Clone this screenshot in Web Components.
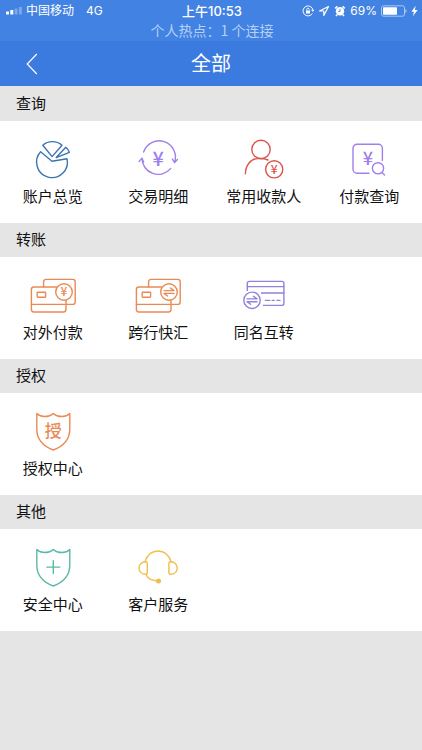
<!DOCTYPE html>
<html lang="zh-CN">
<head>
<meta charset="utf-8">
<meta name="viewport" content="width=device-width, initial-scale=1">
<title>全部</title>
<style>
  body {
    margin: 0;
    background: #e5e5e5;
    color: #111;
    font-family: 'Liberation Sans', 'Noto Sans CJK SC', sans-serif;
  }
  main {
    border-top: 1px solid #e5e5e5;
  }
</style>
</head>
<body>
<status-bar carrier="中国移动" network="4G" time="上午10:53" battery="69">个人热点：1 个连接</status-bar>
<nav-bar>全部</nav-bar>
<main>
  <menu-section heading="查询">
    <menu-tile icon="pie" color="#3c74b2">账户总览</menu-tile>
    <menu-tile icon="exchange" color="#a080ea">交易明细</menu-tile>
    <menu-tile icon="payee" color="#d9564c">常用收款人</menu-tile>
    <menu-tile icon="search" color="#a080ea">付款查询</menu-tile>
  </menu-section>
  <menu-section heading="转账">
    <menu-tile icon="cards-pay" color="#e98a55">对外付款</menu-tile>
    <menu-tile icon="cards-swap" color="#e98a55">跨行快汇</menu-tile>
    <menu-tile icon="card-swap" color="#9282dc">同名互转</menu-tile>
  </menu-section>
  <menu-section heading="授权">
    <menu-tile icon="shield-auth" color="#e98a55">授权中心</menu-tile>
  </menu-section>
  <menu-section heading="其他">
    <menu-tile icon="shield-plus" color="#5bb9a6">安全中心</menu-tile>
    <menu-tile icon="headset" color="#efbe4c">客户服务</menu-tile>
  </menu-section>
</main>

<script>
const glyph = (char, x, y, size) =>
  `<text x="${x}" y="${y}" font-size="${size}">${char}</text>`;

// Two half arrows, centred on x, y
const swap = (x, y) =>
  `<path d="M${x - 5} ${y - 1.4}h10l-3.6-2.6M${x + 5} ${y + 1.4}h-10l3.6 2.6"/>`;

const cards = `
  <path d="M14.6 16v-5.2a2.4 2.4 0 0 1 2.4-2.4h26.800a2.4 2.4 0 0 1 2.4 2.4V31a2.4 2.4 0 0 1-2.4 2.4H2.4"/>
  <path d="M27.5 16H4.8a2.4 2.4 0 0 0-2.4 2.4v20.2A2.4 2.4 0 0 0 4.8 41h29.8a2.4 2.4 0 0 0 2.4-2.4V29.4"/>
  <rect x="8.2" y="21.2" width="8.4" height="5" rx=".6"/>
  <circle cx="35" cy="21" r="8.3" fill="#fff"/>`;

const shield = '<path d="M7.800 6.400c4 4 11.700 4.400 16.500 0 4.800 4.400 12.500 4 16.500 0V22c0 10.500-7.200 17.500-16.500 21C15 39.500 7.800 32.500 7.800 22z"/>';

const icons = {
  pie: `
    <path d="M11.600 16.800 23 26.200l15-2.400A15.400 15.400 0 1 1 11.600 16.800z"/>
    <path d="M13.800 10.200c5.400-4.800 13.800-4.800 19.200 0L23.100 21.600z"/>
    <path d="m27.200 22.600 9.600-10.300c1.600 1.400 2.700 3 3.600 5z"/>`,
  exchange: `
    <path d="M9.600 17a16 16 0 0 1 31 10.200M38.400 24l2.200 3.600 2.800-3"/>
    <path d="M36.600 33.600A16.200 16.200 0 0 1 8 23.200M5 26.600l3-3.400 1.600 3.800"/>
    ${glyph('¥', 24.3, 31, 20)}`,
  payee: `
    <circle cx="21" cy="14.400" r="9.200"/>
    <path d="M5.400 38.700c.2-8.500 5.300-15.100 12.600-15.100 3.500-.2 7 .1 10 1.400"/>
    <circle cx="34.200" cy="34.300" r="8.600"/>
    ${glyph('¥', 34.2, 38.6, 12)}`,
  search: `
    <path d="M37.400 25.400V13.300a4 4 0 0 0-4-4H12a4 4 0 0 0-4 4v21a4 4 0 0 0 4 4h12"/>
    <circle cx="33" cy="33.300" r="5.600"/><path d="m37 37.400 2.600 2.600"/>
    ${glyph('¥', 22.8, 30, 18)}`,
  'cards-pay': cards + glyph('¥', 35, 25.4, 12),
  'cards-swap': cards + swap(35, 21),
  'card-swap': `
    <path d="M7.300 19.400v-7.200a1.800 1.800 0 0 1 1.800-1.800h33a1.800 1.800 0 0 1 1.800 1.800v20.400a1.800 1.800 0 0 1-1.800 1.800H23.400"/>
    <path d="M7.300 15.600h36.600M21.400 22h22.500M25.400 29.400h4.400m2.400 0h2m2.800 0h3"/>
    <circle cx="12" cy="29.300" r="8.200"/>
    ${swap(12, 29.3)}`,
  'shield-auth': shield + glyph('授', 24.3, 30, 17),
  'shield-plus': shield + '<path d="M24.300 17.600v13M17.800 24.100h13"/>',
  headset: `
    <path d="M11 18.800C13.300 12 18 8 24 8s10.800 4 13.200 10.800"/>
    <path d="M11.800 18.800c1 0 1.500.6 1.500 1.600v9.400c0 1-.5 1.500-1.500 1.500-4 0-6.800-2.600-6.800-6.200s2.800-6.300 6.800-6.300z"/>
    <path d="M36.400 18.800c-1 0-1.500.6-1.500 1.600v9.400c0 1 .5 1.500 1.500 1.500 4 0 6.800-2.600 6.800-6.200s-2.800-6.300-6.800-6.300z"/>
    <path d="M12 31.500c1.600 3.500 5.200 6 10.400 6.300"/>
    <circle cx="24.500" cy="38" r="1.800" fill="currentColor"/>`
};

class StatusBar extends HTMLElement {
  constructor() {
    super();
    this.attachShadow({ mode: 'open' });
  }

  connectedCallback() {
    const attr = (name) => this.getAttribute(name) || '';
    this.shadowRoot.innerHTML = `
      <style>
        :host {
          display: block;
          padding: 2px 4px 1px 6px;
          background: #4282e2;
          color: #fff;
          font-family: Inter, 'Noto Sans CJK SC', sans-serif;
        }
        .row {
          display: grid;
          grid-template-columns: 1fr auto 1fr;
          align-items: center;
          height: 18px;
          font-size: 12px;
          line-height: 18px;
        }
        .left, .right { display: flex; align-items: center; gap: 4px; }
        .right { justify-content: flex-end; }
        .network { margin-left: 8px; }
        .time { font-size: 13px; font-weight: 500; }
        .notice {
          text-align: center;
          font-family: 'Noto Sans CJK SC', sans-serif;
          font-size: 14px;
          line-height: 20px;
          color: #b5d0f7;
        }
        svg { display: block; }
      </style>
      <div class="row">
        <div class="left">
          <svg width="16" height="8" viewBox="0 0 16 8" fill="#fff">
            <rect y="4.500" width="3" height="3" rx=".5"/>
            <rect x="4.300" y="3" width="3" height="4.500" rx=".5"/>
            <rect x="8.600" y="1.500" width="3" height="6" rx=".5" opacity=".3"/>
            <rect x="12.900" width="3" height="7.500" rx=".5" opacity=".3"/>
          </svg>
          <span>${attr('carrier')}</span>
          <span class="network">${attr('network')}</span>
        </div>
        <div class="time">${attr('time')}</div>
        <div class="right">
          <svg width="12" height="12" viewBox="0 0 12 12" fill="none" stroke="#fff">
            <path d="M10.300 8.500A5 5 0 1 1 11 5.500M9.400 5l1.600 1.300L12 4.600"/>
            <rect x="4" y="5.500" width="4" height="3" fill="#fff" stroke="none"/>
            <path d="M4.700 5.500v-1a1.300 1.300 0 0 1 2.600 0v1" stroke-width=".8"/>
          </svg>
          <svg width="12" height="12" viewBox="0 0 12 12" fill="none" stroke="#fff" stroke-width="1.200" stroke-linejoin="round">
            <path d="M10.500 1.500 1.500 6h4.300v4.500z"/>
          </svg>
          <svg width="12" height="12" viewBox="0 0 12 12">
            <circle cx="6" cy="6.300" r="4.200" fill="#fff"/>
            <path d="M1.200 3.400 3.400 1.400M10.800 3.400 8.600 1.400M3.200 9.600 2 11M8.800 9.600 10 11" stroke="#fff" stroke-width="1.500"/>
            <path d="M6 3.800v2.700H4.200" fill="none" stroke="#4282e2" stroke-width=".9"/>
          </svg>
          <span>${attr('battery')}%</span>
          <svg width="26" height="12" viewBox="0 0 26 12">
            <rect x=".5" y=".8" width="23" height="10.400" rx="2" fill="none" stroke="#a9c8f4"/>
            <rect x="2" y="2.300" width="14" height="7.400" rx=".6" fill="#fff"/>
            <path d="M24.800 4.400v3.200" stroke="#a9c8f4" stroke-width="1.200"/>
          </svg>
          <svg width="7" height="12" viewBox="0 0 7 12"><path d="M4.600.8.400 6.700h2.500L1.900 11.200 6.600 5H3.900z" fill="#fff"/></svg>
        </div>
      </div>
      <div class="notice"><slot></slot></div>
    `;
  }
}

class NavBar extends HTMLElement {
  constructor() {
    super();
    this.attachShadow({ mode: 'open' });
    this.shadowRoot.innerHTML = `
      <style>
        :host {
          display: grid;
          grid-template-columns: 64px 1fr 64px;
          align-items: center;
          height: 45px;
          background: #3b7be0;
          color: #fff;
        }
        button {
          height: 45px;
          padding: 0;
          border: 0;
          background: none;
          color: inherit;
          cursor: pointer;
        }
        svg { display: block; margin: 0 auto; }
        h1 {
          margin: 0;
          text-align: center;
          font-size: 20px;
          font-weight: 400;
          line-height: 28px;
        }
      </style>
      <button type="button" aria-label="返回">
        <svg width="12" height="22" viewBox="0 0 12 22" fill="none" stroke="currentColor" stroke-width="1.200">
          <path d="M10.800 1 1.200 11l9.600 10"/>
        </svg>
      </button>
      <h1><slot></slot></h1>
    `;
    this.shadowRoot.querySelector('button').addEventListener('click', () => history.back());
  }
}

class MenuSection extends HTMLElement {
  constructor() {
    super();
    this.attachShadow({ mode: 'open' });
  }

  connectedCallback() {
    this.shadowRoot.innerHTML = `
      <style>
        :host { display: block; }
        h2 {
          margin: 0;
          padding: 0 16px;
          background: #e5e5e5;
          font-size: 15px;
          font-weight: 400;
          line-height: 34px;
        }
        .tiles {
          display: grid;
          grid-template-columns: repeat(4, 1fr);
          background: #fff;
        }
      </style>
      <h2>${this.getAttribute('heading') || ''}</h2>
      <div class="tiles"><slot></slot></div>
    `;
  }
}

class MenuTile extends HTMLElement {
  constructor() {
    super();
    this.attachShadow({ mode: 'open' });
  }

  connectedCallback() {
    this.shadowRoot.innerHTML = `
      <style>
        :host { display: block; }
        a {
          display: flex;
          flex-direction: column;
          align-items: center;
          gap: 4px;
          padding: 14px 0 16px;
          color: inherit;
          text-decoration: none;
          font-size: 15px;
          line-height: 20px;
          white-space: nowrap;
        }
        svg {
          display: block;
          color: ${this.getAttribute('color') || '#333'};
        }
        text {
          fill: currentColor;
          stroke: none;
          text-anchor: middle;
          font-family: 'Noto Sans CJK SC', sans-serif;
          font-weight: 500;
        }
      </style>
      <a href="#${this.getAttribute('icon')}">
        <svg width="48" height="48" viewBox="0 0 48 48" fill="none" stroke="currentColor"
          stroke-width="1.400" stroke-linecap="round" stroke-linejoin="round" aria-hidden="true">
          ${icons[this.getAttribute('icon')] || ''}
        </svg>
        <span><slot></slot></span>
      </a>
    `;
  }
}

customElements.define('status-bar', StatusBar);
customElements.define('nav-bar', NavBar);
customElements.define('menu-section', MenuSection);
customElements.define('menu-tile', MenuTile);
</script>
</body>
</html>
